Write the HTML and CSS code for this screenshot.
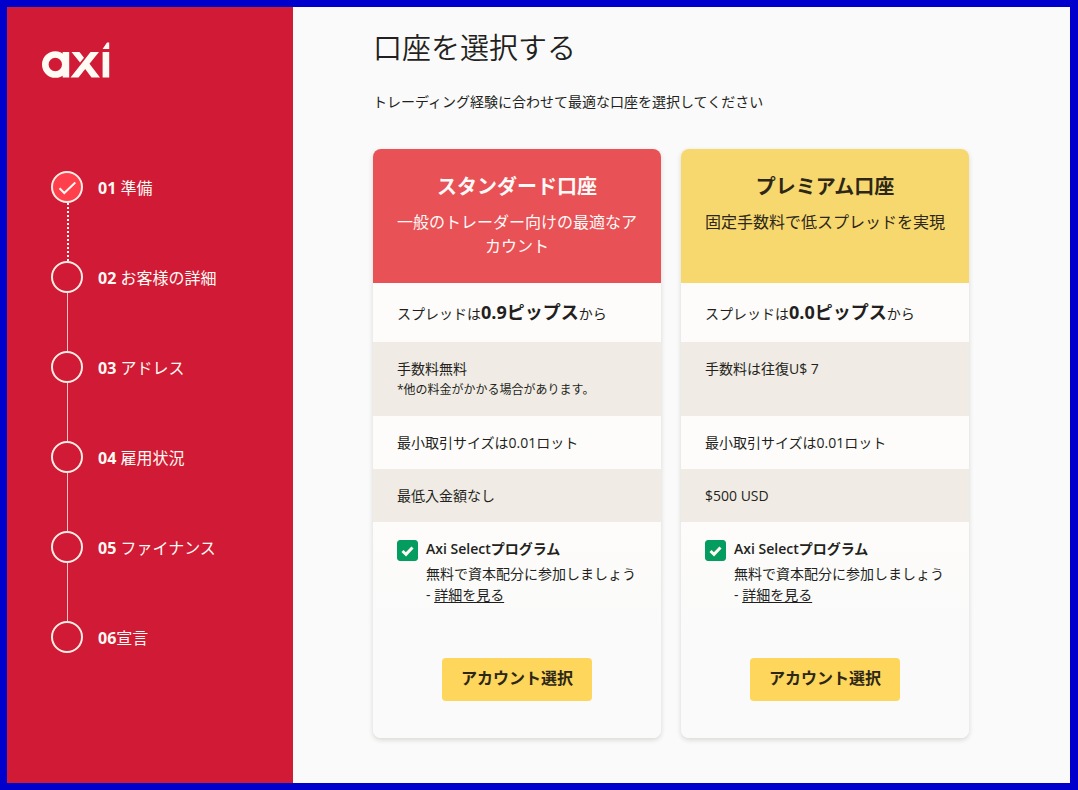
FILE: index.html
```html
<!DOCTYPE html>
<html lang="ja">
<head>
<meta charset="utf-8">
<meta name="viewport" content="width=device-width, initial-scale=1">
<title>口座を選択する</title>
<link rel="stylesheet" href="styles.css">
</head>
<body>
<div class="app">
  <aside class="sidebar">
    <svg class="logo" viewBox="0 0 68 37" role="img" aria-label="axi">
      <circle cx="13.300" cy="22.500" r="10" fill="none" stroke="#fffaf4" stroke-width="6.600"/>
      <path fill="#fffaf4" d="M20.700 10H27.200V35.400H20.700ZM29.500 10H37.500L42 15.700L38 20.500ZM48.500 10H57L47.500 21.700L58 35.400H49.500L43.200 27L36.500 35.400H28.500L39.200 22ZM60.600 10H67.200V35.400H60.600ZM60.600 7L65 0.500H67.200V7Z"/>
    </svg>
    <ol class="steps">
      <li class="step step-done">
        <span class="marker"><svg class="marker-check" viewBox="0 0 32 32" aria-hidden="true"><path d="M8.500 17.200L13.300 22L24.300 11.500"/></svg></span>
        <span class="step-label"><b>01</b> 準備</span>
      </li>
      <li class="step"><span class="marker"></span><span class="step-label"><b>02</b> お客様の詳細</span></li>
      <li class="step"><span class="marker"></span><span class="step-label"><b>03</b> アドレス</span></li>
      <li class="step"><span class="marker"></span><span class="step-label"><b>04</b> 雇用状況</span></li>
      <li class="step"><span class="marker"></span><span class="step-label"><b>05</b> ファイナンス</span></li>
      <li class="step"><span class="marker"></span><span class="step-label"><b>06</b>宣言</span></li>
    </ol>
  </aside>
  <main class="main">
    <h1 class="title">口座を選択する</h1>
    <p class="lead">トレーディング経験に合わせて最適な口座を選択してください</p>
    <div class="cards">
      <section class="card">
        <header class="card-head card-head-standard">
          <h2 class="card-title">スタンダード口座</h2>
          <p class="card-desc">一般のトレーダー向けの最適なアカウント</p>
        </header>
        <p class="row row-spread">スプレッドは<strong class="pips">0.9ピップス</strong>から</p>
        <p class="row row-tint">手数料無料<small class="note">*他の料金がかかる場合があります。</small></p>
        <p class="row">最小取引サイズは0.01ロット</p>
        <p class="row row-tint">最低入金額なし</p>
        <div class="card-foot">
          <div class="program">
            <span class="check">
              <input class="check-input" type="checkbox" id="select-standard" checked>
              <svg class="check-icon" viewBox="0 0 21 21" aria-hidden="true"><path d="M5.500 11L9 14.300L15.500 7.500"/></svg>
            </span>
            <div class="program-text">
              <label class="program-name" for="select-standard">Axi Selectプログラム</label>
              <p class="program-desc">無料で資本配分に参加しましょう - <a class="link" href="#">詳細を見る</a></p>
            </div>
          </div>
          <button class="button" type="button">アカウント選択</button>
        </div>
      </section>
      <section class="card">
        <header class="card-head card-head-premium">
          <h2 class="card-title">プレミアム口座</h2>
          <p class="card-desc">固定手数料で低スプレッドを実現</p>
        </header>
        <p class="row row-spread">スプレッドは<strong class="pips">0.0ピップス</strong>から</p>
        <p class="row row-tint">手数料は往復U$ 7</p>
        <p class="row">最小取引サイズは0.01ロット</p>
        <p class="row row-tint">$500 USD</p>
        <div class="card-foot">
          <div class="program">
            <span class="check">
              <input class="check-input" type="checkbox" id="select-premium" checked>
              <svg class="check-icon" viewBox="0 0 21 21" aria-hidden="true"><path d="M5.500 11L9 14.300L15.500 7.500"/></svg>
            </span>
            <div class="program-text">
              <label class="program-name" for="select-premium">Axi Selectプログラム</label>
              <p class="program-desc">無料で資本配分に参加しましょう - <a class="link" href="#">詳細を見る</a></p>
            </div>
          </div>
          <button class="button" type="button">アカウント選択</button>
        </div>
      </section>
    </div>
  </main>
</div>
</body>
</html>
```

FILE: styles.css
```css
* {
  box-sizing: border-box;
}

body,
h1,
h2,
p,
ol {
  margin: 0;
  padding: 0;
}

body {
  color: #231f20;
  background: #fafafa;
  font-family: "Open Sans", "Noto Sans CJK JP", sans-serif;
  font-size: 14px;
  line-height: 21px;
}

.app {
  display: flex;
  min-height: 100vh;
  border: 7px solid #0000cc;
  border-right-width: 8px;
}

.sidebar {
  flex: 0 0 286px;
  padding: 35px 35px 40px;
  color: #fffaf4;
  background: #d11a35;
}

.logo {
  display: block;
  width: 68px;
  height: 37px;
}

.steps {
  margin-top: 92px;
  padding-left: 9px;
  list-style: none;
}

.step {
  position: relative;
  display: flex;
  gap: 15px;
  height: 90px;
  font-size: 16px;
}

.step::after {
  content: "";
  position: absolute;
  top: 32px;
  bottom: 0;
  left: 16px;
  border-left: 1px solid #f3c3c4;
}

.step-done::after {
  border-left: 2px dotted #fffaf4;
}

.step:last-child {
  height: 32px;
}

.step:last-child::after {
  display: none;
}

.marker {
  flex: none;
  width: 32px;
  height: 32px;
  border: 2px solid #fdeee6;
  border-radius: 50%;
}

.step-done .marker {
  background: #ff404c;
}

.marker-check {
  display: block;
  width: 32px;
  height: 32px;
  margin: -2px;
  fill: none;
  stroke: #fffaf4;
  stroke-width: 2;
}

.step-label {
  line-height: 34px;
}

.main {
  flex: 1;
  padding: 20px 80px 44px;
}

.title {
  font-size: 29px;
  font-weight: 350;
  line-height: 42px;
}

.lead {
  margin-top: 22px;
}

.cards {
  display: grid;
  grid-template-columns: repeat(2, minmax(0, 1fr));
  grid-template-rows: repeat(6, auto);
  column-gap: 20px;
  max-width: 596px;
  margin-top: 37px;
}

.card {
  display: grid;
  grid-row: span 6;
  grid-template-rows: subgrid;
  overflow: hidden;
  border-radius: 8px;
  background: #fafafa;
  box-shadow: 0 2px 5px rgba(40, 35, 20, 0.16);
}

.card-head {
  padding: 24px 24px 25px;
  text-align: center;
}

.card-head-standard {
  color: #fffaf8;
  background: #e85156;
}

.card-head-premium {
  color: #2d2718;
  background: #f7d86f;
}

.card-title {
  font-size: 20px;
  line-height: 28px;
}

.card-desc {
  margin-top: 9px;
  font-size: 16px;
  line-height: 24px;
}

.row {
  padding: 16px 24px;
  background: #fdfcfa;
}

.row-spread {
  padding-bottom: 15px;
  line-height: 27px;
}

.row-tint {
  background: #f0ebe4;
}

.pips {
  font-size: 18px;
}

.note {
  display: block;
  font-size: 12px;
}

.card-foot {
  display: flex;
  flex-direction: column;
  align-items: center;
  gap: 53px;
  padding: 16px 24px 37px;
  background: linear-gradient(#fdfcfa, #fafafa 50%);
}

.program {
  display: flex;
  gap: 8px;
  width: 100%;
}

.check {
  display: grid;
  flex: none;
  width: 21px;
  height: 21px;
  margin-top: 2px;
}

.check-input,
.check-icon {
  grid-area: 1 / 1;
  width: 21px;
  height: 21px;
  margin: 0;
}

.check-input {
  appearance: none;
  border: 1px solid #059c60;
  border-radius: 3px;
}

.check-input:checked {
  background: #059c60;
}

.check-icon {
  visibility: hidden;
  pointer-events: none;
  fill: none;
  stroke: #fffaf4;
  stroke-width: 3;
}

.check-input:checked + .check-icon {
  visibility: visible;
}

.program-name {
  display: block;
  font-weight: 600;
}

.program-desc {
  margin-top: 4px;
}

.link {
  color: inherit;
  text-underline-offset: 2px;
}

.button {
  padding: 8px 19px 11px;
  border: 0;
  border-radius: 4px;
  color: #2d2718;
  background: #fdd65b;
  font-family: inherit;
  font-size: 16px;
  font-weight: 700;
  line-height: 24px;
}
```
